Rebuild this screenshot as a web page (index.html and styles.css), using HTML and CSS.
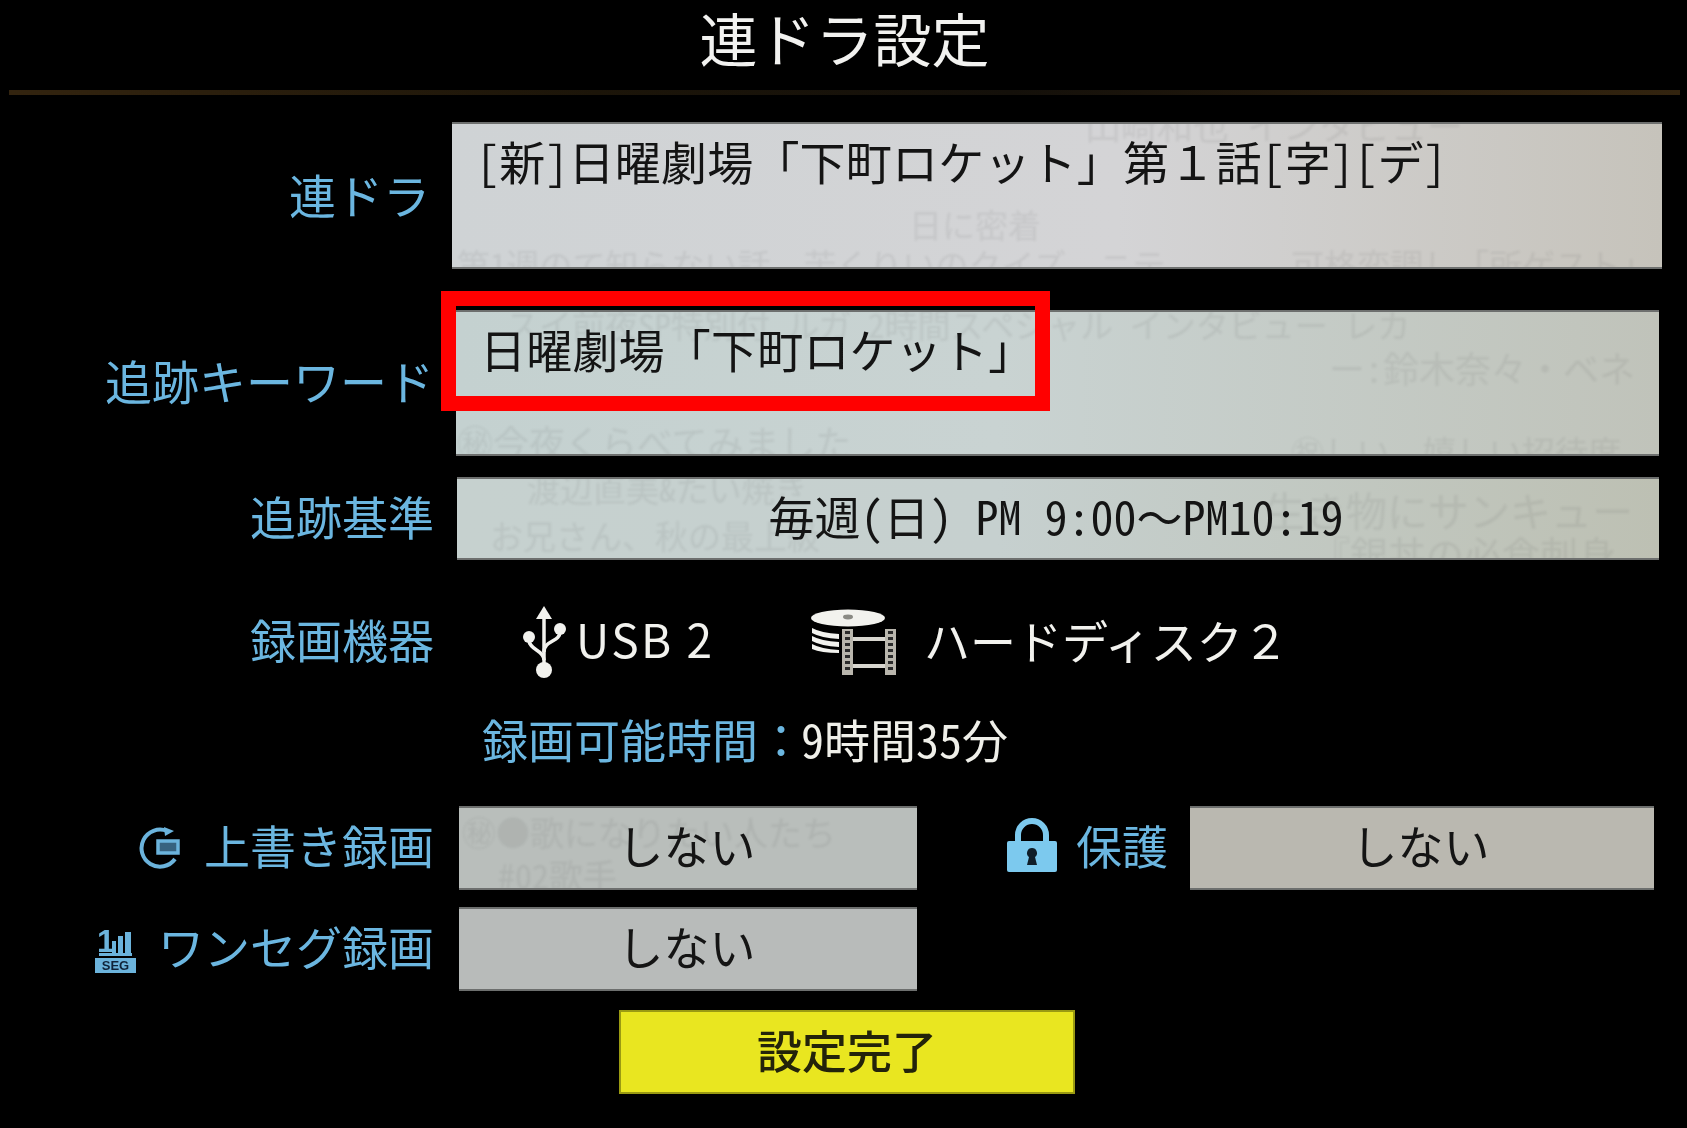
FILE: index.html
```html
<!DOCTYPE html>
<html lang="ja">
<head>
<meta charset="utf-8">
<title>連ドラ設定</title>
<link rel="stylesheet" href="styles.css">
</head>
<body>
<div class="screen">
  <h1 class="title">連ドラ設定</h1>

  <div class="row row-program">
    <div class="label label-program"><span class="label-text">連ドラ</span></div>
    <div class="box box-program">
      <span class="ghost g-a">日に密着</span>
      <span class="ghost g-b">第1週のて知らない話、苦くりいのクイズ、ニテ</span>
      <span class="ghost g-c">可格変調し「所ゲスト」</span>
      <span class="ghost g-d">山崎和也　インタビュー</span>
      <span class="box-text">[新]日曜劇場「下町ロケット」<span class="wide">第１話</span>[字][デ]</span>
    </div>
  </div>

  <div class="row row-keyword">
    <div class="label label-keyword"><span class="label-text">追跡キーワード</span></div>
    <div class="box box-keyword">
      <span class="ghost g-e">スイ前夜SP特別付　ルガ 2時間スペシャル　インタビュー レカ</span>
      <span class="ghost g-f">ー：鈴木奈々・ベネ</span>
      <span class="ghost g-g">㊙今夜くらべてみました</span>
      <span class="ghost g-h">㊗しい、嬉しい招待席</span>
      <span class="box-text">日曜劇場「下町ロケット」</span>
    </div>
  </div>

  <div class="row row-basis">
    <div class="label"><span class="label-text">追跡基準</span></div>
    <div class="box box-basis">
      <span class="ghost g-i">渡辺直美&amp;たい焼き</span>
      <span class="ghost g-j">お兄さん、秋の最上級</span>
      <span class="ghost g-k">生き物にサンキュー</span>
      <span class="ghost g-l">『銀丼の必食刺身</span>
      <span class="schedule">毎週(日) PM 9:00<span class="wide">～</span>PM10:19</span>
    </div>
  </div>

  <div class="row row-device">
    <div class="label"><span class="label-text">録画機器</span></div>
    <div class="device">
      <svg class="icon-usb" viewBox="0 0 45 72" aria-hidden="true">
        <path class="fill-white" d="M22 0 L14 13 H30 Z"/>
        <path class="line-white" d="M22 10 V60"/>
        <circle class="fill-white" cx="22" cy="64" r="8"/>
        <circle class="fill-white" cx="7" cy="31" r="6"/>
        <circle class="fill-white" cx="38" cy="23" r="6"/>
        <path class="line-white" d="M7 34 C7 44 22 44 22 54"/>
        <path class="line-white" d="M38 26 C38 36 22 34 22 46"/>
      </svg>
      <span class="usb-text">USB 2</span>
      <svg class="icon-disk" viewBox="0 0 85 66" aria-hidden="true">
        <ellipse class="fill-white" cx="37" cy="9" rx="37" ry="8.5"/>
        <ellipse class="hole" cx="37" cy="8" rx="5" ry="2.4"/>
        <path class="fill-white" d="M1 19 Q10 24 28 25 V30 Q10 29 1 24 Z"/>
        <path class="fill-white" d="M1 27 Q10 32 28 33 V38 Q10 37 1 32 Z"/>
        <path class="fill-white" d="M1 35 Q10 40 28 41 V44 Q10 44 1 40 Z"/>
        <rect class="film" x="31" y="20" width="11" height="46"/>
        <rect class="film" x="74" y="20" width="11" height="46"/>
        <path class="perf" d="M36.5 22 V64 M79.5 22 V64"/>
        <path class="line-film" d="M42 30 H74 M42 57 H74"/>
      </svg>
      <span class="disk-text">ハードディスク２</span>
    </div>
  </div>

  <div class="row row-time">
    <div class="time"><span class="time-key">録画可能時間：</span><span class="time-value">9時間35分</span></div>
  </div>

  <div class="row row-overwrite">
    <div class="label">
      <svg class="icon-overwrite" viewBox="0 0 45 42" aria-hidden="true">
        <path class="line-blue" d="M30 4 A18.5 18.5 0 1 0 38 32"/>
        <path class="fill-blue" d="M27 0 L37 4 L28 9 Z"/>
        <rect class="rect-blue" x="21" y="14" width="20" height="12"/>
      </svg>
      <span class="label-text">上書き録画</span>
    </div>
    <div class="box box-choice">
      <span class="ghost g-m">㊙●歌になりたい人たち</span>
      <span class="ghost g-n">#０２歌手</span>
      <span class="choice-text">しない</span>
    </div>
    <svg class="icon-lock" viewBox="0 0 50 55" aria-hidden="true">
      <path class="shackle" d="M11 25 V18 A14 14 0 0 1 39 18 V25"/>
      <rect class="lock-body" x="0" y="24" width="50" height="31" rx="2"/>
      <path class="keyhole" d="M25 31 a5 5 0 0 1 3 9 l2 8 h-10 l2 -8 a5 5 0 0 1 3 -9 Z"/>
    </svg>
    <div class="protect-label">保護</div>
    <div class="box box-protect"><span class="choice-text">しない</span></div>
  </div>

  <div class="row row-seg">
    <div class="label">
      <svg class="icon-seg" viewBox="0 0 41 47" aria-hidden="true">
        <text class="seg-one" x="2" y="26">1</text>
        <rect class="fill-blue" x="17" y="15" width="4" height="12"/>
        <rect class="fill-blue" x="23" y="10" width="5" height="17"/>
        <rect class="fill-blue" x="30" y="6" width="6" height="21"/>
        <rect class="fill-blue" x="4" y="27" width="33" height="3"/>
        <rect class="fill-blue" x="0" y="32" width="41" height="15"/>
        <text class="seg-word" x="20.5" y="44">SEG</text>
      </svg>
      <span class="label-text">ワンセグ録画</span>
    </div>
    <div class="box box-choice box-choice-plain"><span class="choice-text">しない</span></div>
  </div>

  <div class="row row-done">
    <div class="done">設定完了</div>
  </div>
</div>
<div class="highlight"></div>
</body>
</html>
```
FILE: styles.css
```css
* { box-sizing: border-box; }
html, body { margin: 0; padding: 0; background: #000; }
body { width: 1687px; height: 1128px; overflow: hidden; position: relative; font-family: "Noto Sans CJK JP", "Noto Sans", sans-serif; }
.screen { width: 1687px; height: 1128px; background: #000; display: flex; flex-direction: column; filter: blur(0.7px); }

.title { margin: 0 7px 0 9px; height: 95px; padding-bottom: 16px; border-bottom: 5px solid; border-image: linear-gradient(90deg, #33240f, #1c1509 35%, #14100a 60%, #33240f) 1; display: flex; align-items: center; justify-content: center; color: #f2f2f0; font-size: 58px; font-weight: 400; line-height: 1; }

.row { display: flex; align-items: center; }
.row-program { margin-top: 27px; height: 147px; }
.row-keyword { margin-top: 41px; height: 146px; }
.row-basis { margin-top: 21px; height: 83px; }
.row-device { margin-top: 52px; height: 60px; }
.row-time { margin-top: 41px; height: 60px; }
.row-overwrite { margin-top: 33px; height: 84px; }
.row-seg { margin-top: 17px; height: 84px; }
.row-done { margin-top: 19px; height: 84px; }

.label { width: 434px; flex: none; display: flex; align-items: center; justify-content: flex-end; gap: 22px; color: #6bb6e0; font-size: 46px; line-height: 1; white-space: nowrap; }
.label-text { display: block; padding-bottom: 8px; }
.label-program { padding-right: 4px; font-size: 47px; }
.label-program .label-text { padding-bottom: 4px; }
.label-keyword { font-size: 47px; }

.box { position: relative; overflow: hidden; align-self: stretch; flex: 1; border-top: 2px solid #6d6f6e; border-bottom: 2px solid #6d6f6e; color: #141414; font-size: 46px; line-height: 1; white-space: nowrap; font-feature-settings: "hwid" 1; }
.box-program { margin: 0 25px 0 18px; background: linear-gradient(90deg, #cfd3d5, #d4d4d6 55%, #c6c3bb); }
.box-keyword { margin: 0 28px 0 22px; background: linear-gradient(90deg, #c4d1d0, #c9d3d2 45%, #c0c3ba); }
.box-basis { margin: 0 28px 0 23px; background: linear-gradient(90deg, #c6d1cf, #c6d0cf 45%, #bdc0b3); display: flex; align-items: center; justify-content: center; }
.box-choice { flex: none; width: 458px; margin-left: 25px; background: #b9bebb; display: flex; align-items: center; justify-content: center; }
.box-choice-plain { background: #b8bbba; }
.box-protect { flex: none; width: 464px; margin-left: 22px; background: #bab8b0; display: flex; align-items: center; justify-content: center; }

.box-text { position: absolute; left: 24px; top: 13px; letter-spacing: 0.2px; }
.wide { font-feature-settings: normal; }
.schedule { position: relative; display: block; padding: 0 4px 8px 0; }
.choice-text { position: relative; display: block; padding: 0 3px 9px 0; font-size: 46px; }

.ghost { position: absolute; color: rgba(70, 75, 75, 0.085); font-size: 33px; line-height: 1; filter: blur(1.3px); }
.g-a { left: 457px; top: 84px; }
.g-b { left: 5px; top: 124px; }
.g-c { left: 839px; top: 124px; }
.g-d { left: 633px; top: -18px; font-size: 36px; }
.g-e { left: 50px; top: -4px; }
.g-f { left: 873px; top: 37px; font-size: 36px; }
.g-g { left: 1px; top: 111px; font-size: 36px; }
.g-h { left: 835px; top: 123px; }
.g-i { left: 70px; top: -7px; }
.g-j { left: 33px; top: 40px; }
.g-k { left: 807px; top: 10px; font-size: 41px; }
.g-l { left: 855px; top: 55px; font-size: 38px; }
.g-m { left: 3px; top: 7px; font-size: 34px; }
.g-n { left: 39px; top: 50px; font-size: 34px; }

.device { display: flex; align-items: center; margin-left: 88px; color: #f2f2ee; }
.icon-usb { width: 45px; height: 72px; flex: none; }
.usb-text { margin-left: 9px; width: 235px; padding-bottom: 8px; font-size: 46px; letter-spacing: 2.5px; line-height: 1; }
.icon-disk { width: 85px; height: 66px; flex: none; }
.disk-text { margin-left: 28px; padding-bottom: 6px; font-size: 46px; line-height: 1; }

.fill-white { fill: #f2f2ee; }
.line-white { fill: none; stroke: #f2f2ee; stroke-width: 3.5; }
.hole { fill: #8a8a84; }
.film { fill: #b9b6ad; }
.perf { fill: none; stroke: #2b2b2b; stroke-width: 5; stroke-dasharray: 3 3; }
.line-film { fill: none; stroke: #d8d6cf; stroke-width: 4; }

.time { margin-left: 482px; padding-bottom: 10px; font-size: 46px; line-height: 1; white-space: nowrap; }
.time-key { color: #6bb6e0; }
.time-value { color: #efefe9; font-feature-settings: "hwid" 1; margin-left: -3px; }

.icon-overwrite { width: 45px; height: 42px; flex: none; }
.icon-seg { width: 41px; height: 47px; flex: none; }
.fill-blue { fill: #6bb3dc; }
.line-blue { fill: none; stroke: #6bb3dc; stroke-width: 4; }
.rect-blue { fill: #37627f; stroke: #6bb3dc; stroke-width: 3.5; }
.seg-one { fill: #6bb3dc; font-family: "Liberation Sans", sans-serif; font-size: 32px; font-weight: 700; }
.seg-word { fill: #10243a; font-family: "Liberation Sans", sans-serif; font-size: 13px; font-weight: 700; text-anchor: middle; }

.icon-lock { width: 50px; height: 55px; flex: none; margin-left: 90px; margin-bottom: 8px; }
.shackle { fill: none; stroke: #7cc9ee; stroke-width: 6; }
.lock-body { fill: #7cc9ee; }
.keyhole { fill: #0f1d28; }
.protect-label { margin-left: 19px; width: 92px; padding-bottom: 8px; color: #6bb6e0; font-size: 46px; line-height: 1; white-space: nowrap; }

.done { margin-left: 619px; width: 456px; height: 84px; display: flex; align-items: center; justify-content: center; padding: 0 0 6px 0; background: #e9e620; border: 2px solid #9a9a12; color: #23230a; font-size: 45px; font-weight: 500; line-height: 1; }

.highlight { position: absolute; left: 441px; top: 291px; width: 609px; height: 120px; border: 15px solid #f00; }
```
